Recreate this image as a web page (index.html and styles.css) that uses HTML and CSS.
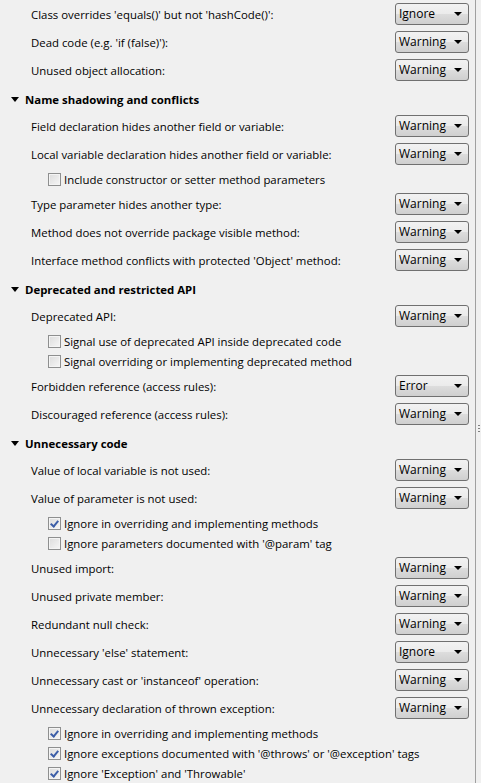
FILE: index.html
```html
<!DOCTYPE html>
<html>
<head>
<meta charset="utf-8">
<link rel="stylesheet" href="styles.css">
</head>
<body>
<div class="pane">
  <div class="content">
    <div class="row"><span class="label">Class overrides 'equals()' but not 'hashCode()':</span><div class="combo">Ignore<span class="arrow"></span></div></div>
    <div class="row"><span class="label">Dead code (e.g. 'if (false)'):</span><div class="combo">Warning<span class="arrow"></span></div></div>
    <div class="row"><span class="label">Unused object allocation:</span><div class="combo">Warning<span class="arrow"></span></div></div>

    <div class="section"><span class="twisty"></span>Name shadowing and conflicts</div>
    <div class="row"><span class="label">Field declaration hides another field or variable:</span><div class="combo">Warning<span class="arrow"></span></div></div>
    <div class="row"><span class="label">Local variable declaration hides another field or variable:</span><div class="combo">Warning<span class="arrow"></span></div></div>
    <div class="checks">
      <div class="check"><span class="cb"></span>Include constructor or setter method parameters</div>
    </div>
    <div class="row"><span class="label">Type parameter hides another type:</span><div class="combo">Warning<span class="arrow"></span></div></div>
    <div class="row"><span class="label">Method does not override package visible method:</span><div class="combo">Warning<span class="arrow"></span></div></div>
    <div class="row"><span class="label">Interface method conflicts with protected 'Object' method:</span><div class="combo">Warning<span class="arrow"></span></div></div>

    <div class="section"><span class="twisty"></span>Deprecated and restricted API</div>
    <div class="row"><span class="label">Deprecated API:</span><div class="combo">Warning<span class="arrow"></span></div></div>
    <div class="checks">
      <div class="check"><span class="cb"></span>Signal use of deprecated API inside deprecated code</div>
      <div class="check"><span class="cb"></span>Signal overriding or implementing deprecated method</div>
    </div>
    <div class="row"><span class="label">Forbidden reference (access rules):</span><div class="combo">Error<span class="arrow"></span></div></div>
    <div class="row"><span class="label">Discouraged reference (access rules):</span><div class="combo">Warning<span class="arrow"></span></div></div>

    <div class="section"><span class="twisty"></span>Unnecessary code</div>
    <div class="row"><span class="label">Value of local variable is not used:</span><div class="combo">Warning<span class="arrow"></span></div></div>
    <div class="row"><span class="label">Value of parameter is not used:</span><div class="combo">Warning<span class="arrow"></span></div></div>
    <div class="checks">
      <div class="check"><span class="cb checked"></span>Ignore in overriding and implementing methods</div>
      <div class="check"><span class="cb"></span>Ignore parameters documented with '@param' tag</div>
    </div>
    <div class="row"><span class="label">Unused import:</span><div class="combo">Warning<span class="arrow"></span></div></div>
    <div class="row"><span class="label">Unused private member:</span><div class="combo">Warning<span class="arrow"></span></div></div>
    <div class="row"><span class="label">Redundant null check:</span><div class="combo">Warning<span class="arrow"></span></div></div>
    <div class="row"><span class="label">Unnecessary 'else' statement:</span><div class="combo">Ignore<span class="arrow"></span></div></div>
    <div class="row"><span class="label">Unnecessary cast or 'instanceof' operation:</span><div class="combo">Warning<span class="arrow"></span></div></div>
    <div class="row"><span class="label">Unnecessary declaration of thrown exception:</span><div class="combo">Warning<span class="arrow"></span></div></div>
    <div class="checks">
      <div class="check"><span class="cb checked"></span>Ignore in overriding and implementing methods</div>
      <div class="check"><span class="cb checked"></span>Ignore exceptions documented with '@throws' or '@exception' tags</div>
      <div class="check"><span class="cb checked"></span>Ignore 'Exception' and 'Throwable'</div>
    </div>
  </div>
  <div class="sash"><span class="grip"></span></div>
</div>
</body>
</html>
```

FILE: styles.css
```css
html, body {
  margin: 0;
  padding: 0;
  background: #f0f0f0;
}
body {
  font-family: "Open Sans", "Noto Sans", sans-serif;
  font-size: 11.4px;
  color: #000;
  overflow: hidden;
}
.pane {
  display: flex;
  width: 481px;
  height: 783px;
  overflow: hidden;
}
.content {
  flex: 1;
  display: flex;
  flex-direction: column;
  padding-right: 6px;
}
.row {
  display: flex;
  align-items: center;
  height: 28px;
  flex: none;
  padding-left: 31px;
}
.label {
  flex: 1;
  white-space: nowrap;
}
.combo {
  position: relative;
  width: 72px;
  height: 20px;
  border: 1px solid #707070;
  border-radius: 3px;
  background: linear-gradient(#f2f2f2 0%, #ebebeb 50%, #dddddd 51%, #cfcfcf 100%);
  box-sizing: content-box;
  display: flex;
  align-items: center;
  text-indent: 3px;
  line-height: 20px;
  font-size: 12px;
}
.arrow {
  position: absolute;
  right: 6px;
  top: 8px;
  width: 0;
  height: 0;
  border-left: 4px solid transparent;
  border-right: 4px solid transparent;
  border-top: 4px solid #000;
}
.section {
  display: flex;
  align-items: center;
  height: 26px;
  margin-top: 2px;
  flex: none;
  font-weight: bold;
  padding-left: 11px;
}
.twisty {
  width: 0;
  height: 0;
  border-left: 4px solid transparent;
  border-right: 4px solid transparent;
  border-top: 5px solid #000;
  margin-right: 6px;
}
.checks {
  display: flex;
  flex-direction: column;
  padding: 1px 0;
  flex: none;
}
.check {
  display: flex;
  align-items: center;
  height: 20px;
  padding-left: 48px;
  white-space: nowrap;
}
.cb {
  width: 11px;
  height: 11px;
  border: 1px solid #8e8f8f;
  background: linear-gradient(135deg, #dcdcdc, #f6f6f6);
  box-shadow: inset 0 0 0 1px #f4f4f4;
  margin-right: 3px;
  position: relative;
  flex: none;
}
.cb.checked::after {
  content: "";
  position: absolute;
  left: 3px;
  top: 1px;
  width: 3px;
  height: 6px;
  border-right: 2px solid #3c5ea8;
  border-bottom: 2px solid #3c5ea8;
  transform: rotate(40deg);
}
.sash {
  width: 5px;
  flex: none;
  border-left: 1px solid #a0a0a0;
  position: relative;
}
.grip {
  position: absolute;
  left: 2px;
  top: 425px;
  width: 2px;
  height: 8px;
  background: repeating-linear-gradient(#808080 0 1px, transparent 1px 3px);
}
```
